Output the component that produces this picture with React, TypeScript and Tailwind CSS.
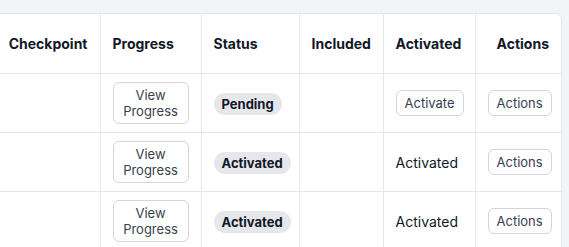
const rows = [
  { status: 'Pending', activated: false },
  { status: 'Activated', activated: true },
  { status: 'Activated', activated: true },
]

export default function App() {
  const cell = 'border-l border-[#e5e7eb] px-3 align-middle'
  const btn =
    'rounded-md border border-[#d1d5db] bg-white text-[13px] leading-4 text-[#374151]'

  return (
    <div
      className="h-[247px] w-[569px] overflow-hidden bg-[#f3f4f6] pt-[13px]"
      style={{ fontFamily: 'Inter, "Liberation Sans", sans-serif' }}
    >
      <div className="flex justify-end pr-[7px]">
        <div className="shrink-0 rounded-md border border-[#e5e7eb] bg-white">
          <table className="w-[601px] table-fixed border-collapse text-[#111827]">
            <colgroup>
              <col className="w-[140px]" />
              <col className="w-[101px]" />
              <col className="w-[98px]" />
              <col className="w-[84px]" />
              <col className="w-[92px]" />
              <col className="w-[86px]" />
            </colgroup>
            <thead>
              <tr className="h-[59px] text-left text-[14px] font-bold">
                <th className="px-3 text-right">Checkpoint</th>
                <th className={cell}>Progress</th>
                <th className={cell}>Status</th>
                <th className={cell}>Included</th>
                <th className={cell}>Activated</th>
                <th className={`${cell} text-right`}>Actions</th>
              </tr>
            </thead>
            <tbody>
              {rows.map((r, i) => (
                <tr key={i} className="h-[59px] border-t border-[#e5e7eb]">
                  <td className="px-3"></td>
                  <td className={cell}>
                    <button className={`${btn} w-[76px] py-1`}>
                      View
                      <br />
                      Progress
                    </button>
                  </td>
                  <td className={cell}>
                    <span className="inline-block rounded-full bg-[#e5e7eb] px-2 py-[3px] text-[13px] font-bold leading-4">
                      {r.status}
                    </span>
                  </td>
                  <td className={cell}></td>
                  <td className={cell}>
                    {r.activated ? (
                      <span className="text-[14px]">Activated</span>
                    ) : (
                      <button className={`${btn} px-2 py-1`}>Activate</button>
                    )}
                  </td>
                  <td className={`${cell} text-right`}>
                    <button className={`${btn} px-2 py-1`}>Actions</button>
                  </td>
                </tr>
              ))}
            </tbody>
          </table>
        </div>
      </div>
    </div>
  )
}
